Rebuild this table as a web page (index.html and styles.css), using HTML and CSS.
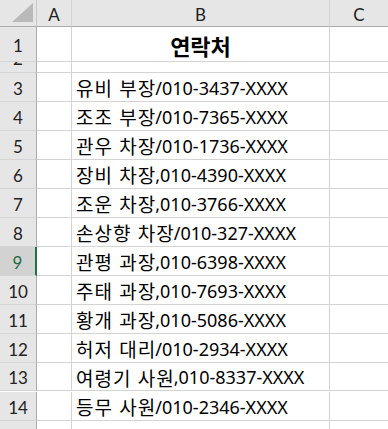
FILE: index.html
```html
<!DOCTYPE html>
<html lang="ko">
<head>
<meta charset="utf-8">
<link rel="stylesheet" href="styles.css">
</head>
<body>
<div class="sheet">
  <div class="hd corner"><span class="tri"></span></div>
  <div class="hd col">A</div>
  <div class="hd col">B</div>
  <div class="hd col last">C</div>

  <div class="rh r1">1</div><div class="c r1"></div><div class="c r1 title">연락처</div><div class="c r1 last"></div>
  <div class="rh r2"><span class="clip">2</span></div><div class="c r2"></div><div class="c r2"></div><div class="c r2 last"></div>

  <div class="rh">3</div><div class="c"></div><div class="c t"><span class="ko">유비 부장</span>/010-3437-XXXX</div><div class="c last"></div>
  <div class="rh">4</div><div class="c"></div><div class="c t"><span class="ko">조조 부장</span>/010-7365-XXXX</div><div class="c last"></div>
  <div class="rh">5</div><div class="c"></div><div class="c t"><span class="ko">관우 차장</span>/010-1736-XXXX</div><div class="c last"></div>
  <div class="rh">6</div><div class="c"></div><div class="c t"><span class="ko">장비 차장</span>,010-4390-XXXX</div><div class="c last"></div>
  <div class="rh">7</div><div class="c"></div><div class="c t"><span class="ko">조운 차장</span>,010-3766-XXXX</div><div class="c last"></div>
  <div class="rh">8</div><div class="c"></div><div class="c t"><span class="ko">손상향 차장</span>/010-327-XXXX</div><div class="c last"></div>
  <div class="rh sel">9</div><div class="c"></div><div class="c t"><span class="ko">관평 과장</span>,010-6398-XXXX</div><div class="c last"></div>
  <div class="rh">10</div><div class="c"></div><div class="c t"><span class="ko">주태 과장</span>,010-7693-XXXX</div><div class="c last"></div>
  <div class="rh">11</div><div class="c"></div><div class="c t"><span class="ko">황개 과장</span>,010-5086-XXXX</div><div class="c last"></div>
  <div class="rh">12</div><div class="c"></div><div class="c t"><span class="ko">허저 대리</span>/010-2934-XXXX</div><div class="c last"></div>
  <div class="rh r13">13</div><div class="c r13"></div><div class="c t r13"><span class="ko">여령기 사원</span>,010-8337-XXXX</div><div class="c last r13"></div>
  <div class="rh">14</div><div class="c"></div><div class="c t"><span class="ko">등무 사원</span>/010-2346-XXXX</div><div class="c last"></div>
  <div class="rh"></div><div class="c"></div><div class="c"></div><div class="c last"></div>
</div>
</body>
</html>
```

FILE: styles.css
```css
html, body {
  margin: 0;
  padding: 0;
  background: #ffffff;
  overflow: hidden;
}

.sheet {
  display: grid;
  grid-template-columns: 37px 35px 258px 1fr;
  grid-auto-rows: 29px;
  grid-template-rows: 27px 35px 11px;
  width: 388px;
  height: 429px;
  overflow: hidden;
}

.sheet > div {
  box-sizing: border-box;
  border-right: 1px solid #d4d4d4;
  border-bottom: 1px solid #d4d4d4;
  display: flex;
  align-items: center;
  overflow: hidden;
}

.sheet > .last {
  border-right: none;
}

.hd {
  background: #e6e6e6;
  border-bottom-color: #ababab !important;
  justify-content: center;
  font-family: Lato, "DejaVu Sans", sans-serif;
  font-size: 17px;
  color: #222;
  position: relative;
}

.hd.col {
  padding-top: 2px;
}

.corner {
  border-right-color: #c8c8c8 !important;
}

.tri {
  position: absolute;
  right: 3px;
  bottom: 4px;
  width: 0;
  height: 0;
  border-left: 21px solid transparent;
  border-bottom: 19px solid #b9b9b9;
}

.rh {
  background: #e6e6e6;
  border-right-color: #ababab !important;
  justify-content: center;
  font-family: Lato, "DejaVu Sans", sans-serif;
  font-size: 17px;
  color: #222;
  padding-top: 2px;
}

.rh.sel {
  background: #d2d2d2;
  color: #1e6b3f;
  border-right: 2px solid #217346 !important;
}

.rh.r2 {
  align-items: flex-start;
  padding-top: 0;
}

.clip {
  display: block;
  margin-top: -15px;
  line-height: 24px;
}

.r13 {
  height: 28px;
}

.c {
  background: #ffffff;
}

.t {
  padding-left: 4px;
  padding-top: 1px;
  font-family: "Noto Sans", "Noto Sans CJK KR", sans-serif;
  font-size: 18px;
  color: #000;
  white-space: nowrap;
}

.ko {
  font-family: "Noto Sans CJK KR", sans-serif;
  font-size: 19px;
  letter-spacing: 1px;
  margin-right: -1px;
}

.title {
  justify-content: center;
  font-family: "Noto Sans CJK KR", sans-serif;
  font-weight: bold;
  font-size: 22px;
  color: #000;
  padding-top: 2px;
}
```
